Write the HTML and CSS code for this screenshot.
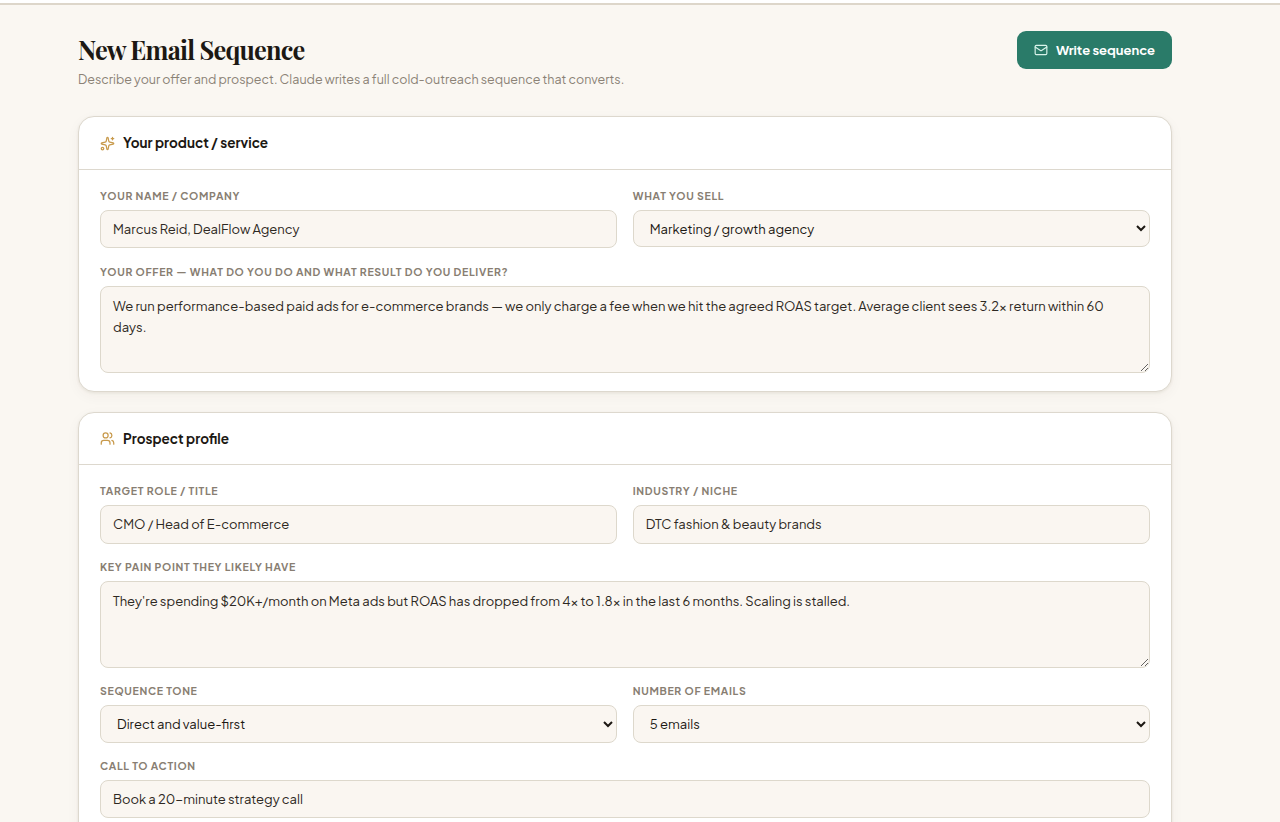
FILE: index.html
```
<!DOCTYPE html>
<html lang="en">
<head>
<meta charset="utf-8">
<title>New Email Sequence</title>
<link rel="stylesheet" href="styles.css">
</head>
<body>
<div class="topbar"></div>
<main class="page">
  <header class="page-header">
    <div>
      <h1 class="title">New Email Sequence</h1>
      <p class="subtitle">Describe your offer and prospect. Claude writes a full cold-outreach sequence that converts.</p>
    </div>
    <button class="button" type="button">
      <svg class="button-icon" viewBox="0 0 24 24"><rect x="2" y="4" width="20" height="16" rx="2"/><path d="m22 7-8.97 5.7a1.94 1.94 0 0 1-2.06 0L2 7"/></svg>
      <span>Write sequence</span>
    </button>
  </header>

  <section class="card">
    <div class="card-header">
      <svg class="card-icon" viewBox="0 0 24 24"><path d="M11.02 2.81a1 1 0 0 1 1.96 0l1.05 5.56a2 2 0 0 0 1.6 1.6l5.56 1.05a1 1 0 0 1 0 1.96l-5.56 1.05a2 2 0 0 0-1.6 1.6l-1.05 5.56a1 1 0 0 1-1.96 0l-1.05-5.56a2 2 0 0 0-1.6-1.6l-5.56-1.05a1 1 0 0 1 0-1.96l5.56-1.05a2 2 0 0 0 1.6-1.6z"/><path d="M20 2v4M22 4h-4"/><circle cx="4" cy="20" r="2"/></svg>
      <h2 class="card-title">Your product / service</h2>
    </div>
    <div class="card-body">
      <div class="row">
        <label class="field"><span class="label">Your name / company</span><input class="control" value="Marcus Reid, DealFlow Agency"></label>
        <label class="field"><span class="label">What you sell</span><select class="control select"><option>Marketing / growth agency</option></select></label>
      </div>
      <label class="field"><span class="label">Your offer — what do you do and what result do you deliver?</span><textarea class="control area">We run performance-based paid ads for e-commerce brands — we only charge a fee when we hit the agreed ROAS target. Average client sees 3.2× return within 60 days.</textarea></label>
    </div>
  </section>

  <section class="card">
    <div class="card-header">
      <svg class="card-icon" viewBox="0 0 24 24"><path d="M16 21v-2a4 4 0 0 0-4-4H6a4 4 0 0 0-4 4v2"/><circle cx="9" cy="7" r="4"/><path d="M22 21v-2a4 4 0 0 0-3-3.87M16 3.13a4 4 0 0 1 0 7.75"/></svg>
      <h2 class="card-title">Prospect profile</h2>
    </div>
    <div class="card-body">
      <div class="row">
        <label class="field"><span class="label">Target role / title</span><input class="control" value="CMO / Head of E-commerce"></label>
        <label class="field"><span class="label">Industry / niche</span><input class="control" value="DTC fashion &amp; beauty brands"></label>
      </div>
      <label class="field"><span class="label">Key pain point they likely have</span><textarea class="control area">They're spending $20K+/month on Meta ads but ROAS has dropped from 4× to 1.8× in the last 6 months. Scaling is stalled.</textarea></label>
      <div class="row">
        <label class="field"><span class="label">Sequence tone</span><select class="control select"><option>Direct and value-first</option></select></label>
        <label class="field"><span class="label">Number of emails</span><select class="control select"><option>5 emails</option></select></label>
      </div>
      <label class="field"><span class="label">Call to action</span><input class="control" value="Book a 20-minute strategy call"></label>
    </div>
  </section>
</main>
</body>
</html>
```
FILE: styles.css
```
* { box-sizing: border-box; }
html { overflow: hidden; }
body {
  margin: 0;
  height: 822px;
  overflow: hidden;
  background: #faf7f2;
  color: #1c1813;
  font-family: "Plus Jakarta Sans", Inter, sans-serif;
}
.topbar { height: 5px; background: #fff; border-bottom: 2px solid #ddd6ca; }
.page { width: 1094px; margin-left: 78px; padding-top: 26px; }
.page-header { display: flex; justify-content: space-between; align-items: flex-start; height: 85.25px; }
.title {
  margin: 3px 0 0;
  font: 700 25.3px/32px "Playfair Display", "Liberation Serif", serif;
  letter-spacing: -0.76px;
  white-space: nowrap;
}
.subtitle { margin: 3px 0 0; font-size: 12.5px; line-height: 20px; color: #8b8276; white-space: nowrap; }
.button {
  display: flex; align-items: center; justify-content: center; gap: 8px;
  width: 155px; height: 38px; padding: 0; border: 0; border-radius: 9px;
  background: #2a7b69; color: #fff;
  font: 700 13px/20px "Plus Jakarta Sans", Inter, sans-serif;
  white-space: nowrap;
}
.button-icon { width: 14px; height: 14px; fill: none; stroke: #d9f3ea; stroke-width: 2; stroke-linecap: round; stroke-linejoin: round; }
.card {
  margin-bottom: 19.75px;
  background: #fff;
  border: 1px solid #ddd8ce;
  border-radius: 16px;
  box-shadow: 0 1px 3px rgba(60, 45, 20, .08), 0 4px 14px rgba(60, 45, 20, .045);
}
.card-header { display: flex; align-items: center; gap: 8px; height: 52.25px; padding: 0.5px 21px 0; border-bottom: 1px solid #ddd8ce; }
.card-icon { width: 15px; height: 15px; fill: none; stroke: #c89a4c; stroke-width: 2; stroke-linecap: round; stroke-linejoin: round; }
.card-title { margin: 0; font-size: 13.5px; line-height: 20px; font-weight: 700; }
.card-body { display: flex; flex-direction: column; gap: 15.25px; padding: 18.25px 21px 18.5px; }
.row { display: grid; grid-template-columns: 1fr 1fr; gap: 15.5px; align-items: start; }
.field { display: flex; flex-direction: column; gap: 6.5px; min-width: 0; }
.label { font-size: 10.5px; line-height: 15.5px; font-weight: 700; letter-spacing: 0.68px; text-transform: uppercase; color: #887e72; white-space: nowrap; }
.control {
  width: 100%; height: 38.5px; margin: 0; padding: 0 12px 0.5px;
  border: 1px solid #ddd8cc; border-radius: 8px; background: #faf6f1;
  color: #2d2822; font: 400 13px/21px "Plus Jakarta Sans", Inter, sans-serif;
  outline: 0;
}
.select { height: 37.25px; padding: 1px 12px 0; color: #1c1813; }
.area { display: block; height: 87px; padding: 9px 12px; resize: vertical; }
```
